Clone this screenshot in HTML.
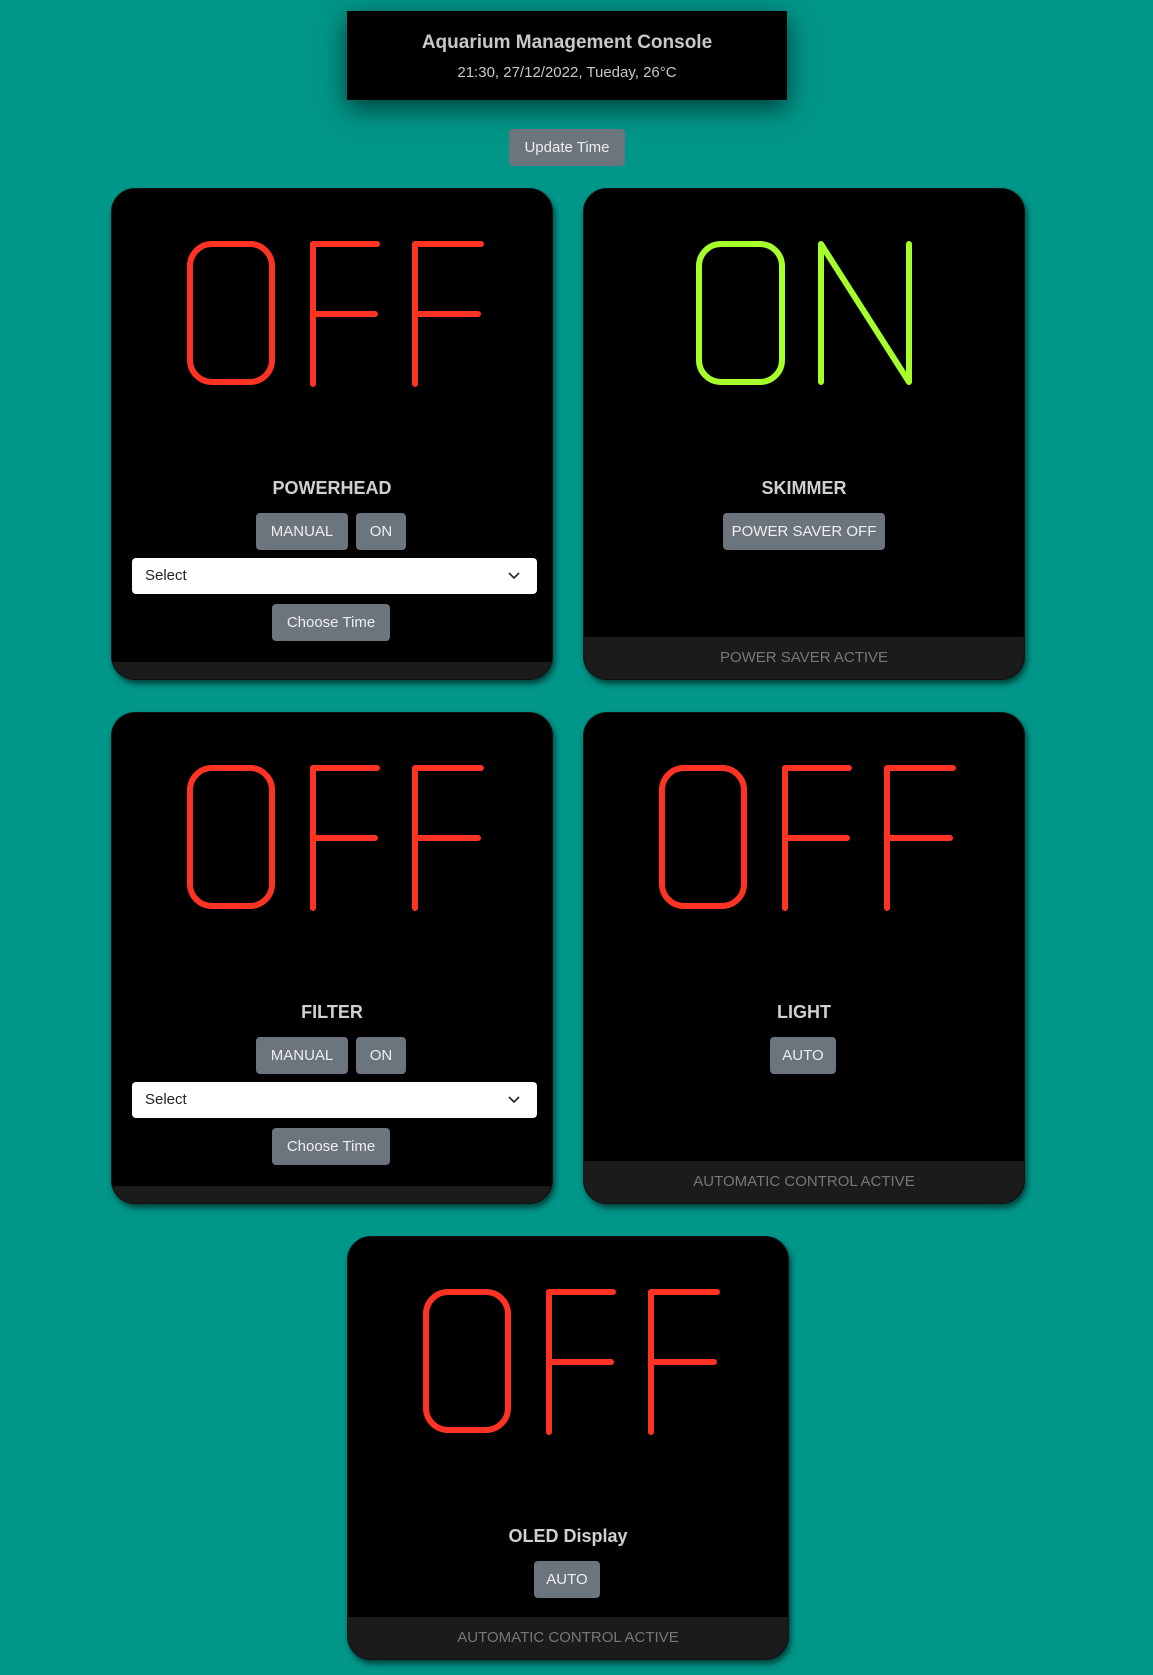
<!DOCTYPE html>
<html><head><style>
body{margin:0;width:1153px;height:1675px;background:#009688;font-family:"Liberation Sans",sans-serif;position:relative;overflow:hidden}
.hdr{position:absolute;left:347px;top:11px;width:440px;height:89px;background:#000;box-shadow:0 8px 25px rgba(0,0,0,.6);color:#c8c8c8;text-align:center}
.hdr .t{font-size:19px;font-weight:bold;margin-top:21px}
.hdr .s{font-size:15px;margin-top:10px}
.btn{position:absolute;background:#6c757d;color:#eee;font-size:15px;border-radius:4px;display:flex;align-items:center;justify-content:center;height:37px}
.card{position:absolute;width:440px;background:#000;border-radius:24px;box-shadow:2px 4px 6px rgba(0,0,0,.55);overflow:hidden;border:1px solid #111}
.card svg{position:absolute;left:0;top:0}
.ttl{position:absolute;left:0;right:0;text-align:center;color:#d0d0d0;font-weight:bold;font-size:18px}
.foot{position:absolute;left:0;right:0;bottom:0;background:#1b1b1b;color:#777;text-align:center;font-size:15px}
.sel{position:absolute;left:20px;width:405px;height:36px;background:#fff;border-radius:4px;font-size:15px;color:#222;line-height:36px;text-indent:13px}
.card .btn{position:absolute}
</style></head><body>
<div class="hdr"><div class="t">Aquarium Management Console</div><div class="s">21:30, 27/12/2022, Tueday, 26°C</div></div>
<div class="btn" style="left:509px;top:129px;width:116px">Update Time</div>

<div class="card" style="left:111px;top:188px;height:490px">
<svg width="440" height="240"><g fill="none" stroke="#ff3324" stroke-width="6" stroke-linecap="round" stroke-linejoin="round">
<rect x="78" y="55" width="82" height="138" rx="22"/>
<path d="M201 195V55h64M201 125h62"/><path d="M303 195V55h66M303 125h63"/></g></svg>
<div class="ttl" style="top:289px">POWERHEAD</div>
<div class="btn" style="left:144px;top:324px;width:92px">MANUAL</div>
<div class="btn" style="left:244px;top:324px;width:50px">ON</div>
<div class="sel" style="top:369px">Select<svg style="left:375px;top:13px" width="14" height="10"><path d="M2 2l5 5 5-5" stroke="#222" stroke-width="1.6" fill="none"/></svg></div>
<div class="btn" style="left:160px;top:415px;width:118px">Choose Time</div>
<div class="foot" style="height:17px"></div>
</div>

<div class="card" style="left:583px;top:188px;height:490px">
<svg width="440" height="240"><g fill="none" stroke="#a6ff2a" stroke-width="6" stroke-linecap="round" stroke-linejoin="round">
<rect x="115" y="55" width="83" height="138" rx="22"/>
<path d="M237 193V55l88 138V55"/></g></svg>
<div class="ttl" style="top:289px">SKIMMER</div>
<div class="btn" style="left:139px;top:324px;width:162px">POWER SAVER OFF</div>
<div class="foot" style="height:42px;line-height:42px">POWER SAVER ACTIVE</div>
</div>

<div class="card" style="left:111px;top:712px;height:490px">
<svg width="440" height="240"><g fill="none" stroke="#ff3324" stroke-width="6" stroke-linecap="round" stroke-linejoin="round">
<rect x="78" y="55" width="82" height="138" rx="22"/>
<path d="M201 195V55h64M201 125h62"/><path d="M303 195V55h66M303 125h63"/></g></svg>
<div class="ttl" style="top:289px">FILTER</div>
<div class="btn" style="left:144px;top:324px;width:92px">MANUAL</div>
<div class="btn" style="left:244px;top:324px;width:50px">ON</div>
<div class="sel" style="top:369px">Select<svg style="left:375px;top:13px" width="14" height="10"><path d="M2 2l5 5 5-5" stroke="#222" stroke-width="1.6" fill="none"/></svg></div>
<div class="btn" style="left:160px;top:415px;width:118px">Choose Time</div>
<div class="foot" style="height:17px"></div>
</div>

<div class="card" style="left:583px;top:712px;height:490px">
<svg width="440" height="240"><g fill="none" stroke="#ff3324" stroke-width="6" stroke-linecap="round" stroke-linejoin="round">
<rect x="78" y="55" width="82" height="138" rx="22"/>
<path d="M201 195V55h64M201 125h62"/><path d="M303 195V55h66M303 125h63"/></g></svg>
<div class="ttl" style="top:289px">LIGHT</div>
<div class="btn" style="left:186px;top:324px;width:66px">AUTO</div>
<div class="foot" style="height:42px;line-height:42px">AUTOMATIC CONTROL ACTIVE</div>
</div>

<div class="card" style="left:347px;top:1236px;height:422px">
<svg width="440" height="240"><g fill="none" stroke="#ff3324" stroke-width="6" stroke-linecap="round" stroke-linejoin="round">
<rect x="78" y="55" width="82" height="138" rx="22"/>
<path d="M201 195V55h64M201 125h62"/><path d="M303 195V55h66M303 125h63"/></g></svg>
<div class="ttl" style="top:289px">OLED Display</div>
<div class="btn" style="left:186px;top:324px;width:66px">AUTO</div>
<div class="foot" style="height:42px;line-height:42px">AUTOMATIC CONTROL ACTIVE</div>
</div>
</body></html>
